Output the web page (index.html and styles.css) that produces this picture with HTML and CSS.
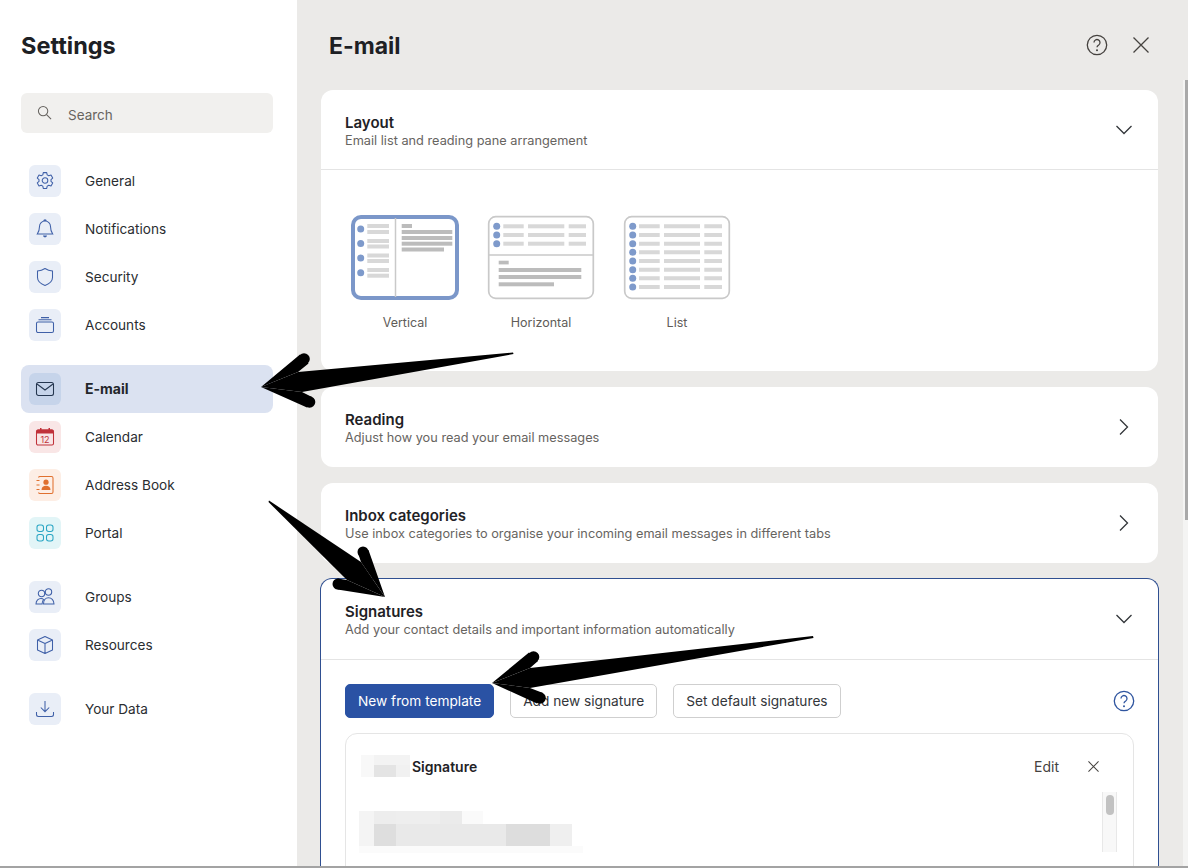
FILE: index.html
```html
<!DOCTYPE html>
<html lang="en">
<head>
<meta charset="utf-8">
<title>Settings</title>
<link rel="stylesheet" href="styles.css">
</head>
<body>
<div class="app">
  <aside class="sidebar">
    <h1 class="page-title">Settings</h1>
    <div class="search">
      <svg class="search-icon" viewBox="0 0 16 16"><circle cx="6.5" cy="6.5" r="5"/><path d="M10.2 10.2 15 15"/></svg>
      <span class="label-low">Search</span>
    </div>
    <nav class="nav">
      <div class="nav-group">
        <div class="nav-item"><span class="tile tile-blue"><svg viewBox="0 0 20 20"><path d="M8.3 1.6h3.4l.5 2.3 1.6.9 2.2-.7 1.7 3-1.7 1.5v1.8l1.7 1.5-1.7 3-2.2-.7-1.6.9-.5 2.3H8.3l-.5-2.3-1.6-.9-2.2.7-1.7-3 1.7-1.5V8.600l-1.700-1.500 1.700-3 2.200.7 1.600-.9z" stroke-linejoin="round"/><circle cx="10" cy="9.500" r="2.800"/></svg></span><span class="label">General</span></div>
        <div class="nav-item"><span class="tile tile-blue"><svg viewBox="0 0 20 20"><path d="M10 2a5.500 5.500 0 0 0-5.500 5.500c0 4-1.200 6-2.200 7.500h15.400c-1-1.500-2.200-3.500-2.200-7.500A5.500 5.500 0 0 0 10 2zM8.800 1.800a1.200 1 0 0 1 2.400 0"/><path class="solid" d="M8 16.600h4a2 1.800 0 0 1-4 0z"/></svg></span><span class="label">Notifications</span></div>
        <div class="nav-item"><span class="tile tile-blue"><svg viewBox="0 0 20 20"><path d="M10 1.500c2.500 1.600 5 2.300 7.500 2.500v6.500c0 3.600-3.300 6.400-7.500 8-4.200-1.600-7.500-4.400-7.500-8V4c2.500-.2 5-.9 7.500-2.500z"/></svg></span><span class="label">Security</span></div>
        <div class="nav-item"><span class="tile tile-blue"><svg viewBox="0 0 20 20"><rect x="1.500" y="7" width="17" height="10.500" rx="1.500"/><path d="M3.500 4.800h13M6 2.600h8"/></svg></span><span class="label">Accounts</span></div>
      </div>
      <div class="nav-group">
        <div class="nav-item active"><span class="tile tile-active"><svg viewBox="0 0 20 20"><rect x="1.500" y="3.500" width="17" height="13" rx="2"/><path d="m2 5 8 6 8-6"/></svg></span><span class="label">E-mail</span></div>
        <div class="nav-item"><span class="tile tile-red"><svg viewBox="0 0 20 20"><path class="solid" d="M3 2.500h14a1.500 1.500 0 0 1 1.500 1.500v2.500h-17V4A1.500 1.500 0 0 1 3 2.500zM5 1h1.500v2H5zM13.500 1H15v2h-1.500z"/><rect x="1.500" y="3" width="17" height="15" rx="1.500"/><text x="10" y="15.500" class="cal-num">12</text></svg></span><span class="label">Calendar</span></div>
        <div class="nav-item"><span class="tile tile-orange"><svg viewBox="0 0 20 20"><path d="M3.500 2.500a1.500 1.500 0 0 1 1.500-1h11.500a1.500 1.500 0 0 1 1.500 1.500v14a1.500 1.500 0 0 1-1.500 1.500H5a1.500 1.500 0 0 1-1.500-1M1.500 5.500h3M1.500 10h3M1.500 14.500h3"/><circle class="solid" cx="11" cy="7.200" r="2.600"/><path class="solid" d="M6.500 15c0-3 2-4.300 4.500-4.300s4.500 1.300 4.500 4.300z"/></svg></span><span class="label">Address Book</span></div>
        <div class="nav-item"><span class="tile tile-teal"><svg viewBox="0 0 20 20"><rect x="2" y="2" width="6.500" height="6.500" rx="2.200"/><rect x="11.500" y="2" width="6.500" height="6.500" rx="2.200"/><rect x="2" y="11.500" width="6.500" height="6.500" rx="2.200"/><rect x="11.500" y="11.500" width="6.500" height="6.500" rx="2.200"/></svg></span><span class="label">Portal</span></div>
      </div>
      <div class="nav-group">
        <div class="nav-item"><span class="tile tile-blue"><svg viewBox="0 0 20 20"><circle cx="6.500" cy="6.500" r="3.200"/><circle cx="13.500" cy="5" r="3.200"/><path d="M1 17c0-3.500 2.500-5.500 5-5.500 1 0 2 .3 2.600 1-1 1-1.500 2.600-1.500 4.500zM8.500 17c0-4 2.200-6.300 5-6.300s5.500 2.300 5.500 6.300z"/></svg></span><span class="label">Groups</span></div>
        <div class="nav-item"><span class="tile tile-blue"><svg viewBox="0 0 20 20"><path d="m10 1.500 7.500 3.500v10L10 18.500 2.500 15V5zM2.500 5 10 8.500 17.500 5M10 8.500v10" stroke-linejoin="round"/></svg></span><span class="label">Resources</span></div>
      </div>
      <div class="nav-group">
        <div class="nav-item"><span class="tile tile-blue"><svg viewBox="0 0 20 20"><path d="M10 2v10.500M5.800 8.500l4.200 4.200 4.200-4.200M1.500 13v2.500a2 2 0 0 0 2 2h13a2 2 0 0 0 2-2V13"/></svg></span><span class="label">Your Data</span></div>
      </div>
    </nav>
  </aside>

  <main class="main">
    <header class="main-header">
      <h2 class="page-title">E-mail</h2>
      <div class="header-actions">
        <svg class="help-icon" viewBox="0 0 22 22"><circle cx="11" cy="11" r="9.700"/><path d="M8 8.500a3 3 0 1 1 4.700 2.500c-1.100.7-1.700 1.200-1.700 2.300"/><circle class="dot" cx="11" cy="16.200" r="1"/></svg>
        <svg class="close-icon" viewBox="0 0 16 16"><path d="m.5.500 15 15M15.500.500l-15 15"/></svg>
      </div>
    </header>

    <section class="card">
      <div class="card-head card-head-line">
        <div><h3>Layout</h3><p>Email list and reading pane arrangement</p></div>
        <svg class="chev" viewBox="0 0 16 10"><path d="m.5 1 7.500 7.500L15.500 1"/></svg>
      </div>
      <div class="layouts">
        <div class="layout-opt">
          <svg class="thumb" viewBox="0 0 108 85">
            <rect class="frame-on" x="2" y="2" width="104" height="81" rx="8"/>
            <path class="rule" d="M44.500 3v79"/>
            <g class="dots"><circle cx="9.700" cy="14" r="3.500"/><circle cx="9.700" cy="28.500" r="3.500"/><circle cx="9.700" cy="43" r="3.500"/><circle cx="9.700" cy="57.700" r="3.500"/></g>
            <g class="light"><rect x="16.300" y="9" width="21.700" height="4"/><rect x="16.300" y="15" width="21.700" height="4"/><rect x="16.300" y="24" width="21.700" height="4"/><rect x="16.300" y="29.500" width="21.700" height="4"/><rect x="16.300" y="38.500" width="21.700" height="4"/><rect x="16.300" y="44" width="21.700" height="4"/><rect x="16.300" y="53" width="21.700" height="4"/><rect x="16.300" y="58.700" width="21.700" height="4"/></g>
            <g class="dark"><rect x="50.700" y="9" width="10.300" height="4"/><rect x="50.700" y="15" width="50.600" height="4"/><rect x="50.700" y="21" width="50.600" height="4"/><rect x="50.700" y="26.700" width="50.600" height="4"/><rect x="50.700" y="32.500" width="42.300" height="4"/></g>
          </svg>
          <span>Vertical</span>
        </div>
        <div class="layout-opt">
          <svg class="thumb" viewBox="0 0 108 85">
            <rect class="frame-off" x="1.700" y="1.700" width="104.600" height="81.600" rx="7"/>
            <path class="rule" d="M2 40h104"/>
            <g class="dots"><circle cx="9.700" cy="11.300" r="3.500"/><circle cx="9.700" cy="20" r="3.500"/><circle cx="9.700" cy="28.700" r="3.500"/></g>
            <g class="light"><rect x="16.300" y="9.300" width="20.400" height="4"/><rect x="41" y="9.300" width="36.300" height="4"/><rect x="81.700" y="9.300" width="17.300" height="4"/><rect x="16.300" y="18" width="20.400" height="4"/><rect x="41" y="18" width="36.300" height="4"/><rect x="81.700" y="18" width="17.300" height="4"/><rect x="16.300" y="26.700" width="20.400" height="4"/><rect x="41" y="26.700" width="36.300" height="4"/><rect x="81.700" y="26.700" width="17.300" height="4"/></g>
            <g class="dark"><rect x="11.700" y="45.700" width="10" height="3.700"/><rect x="11.700" y="53" width="82.600" height="4"/><rect x="11.700" y="60" width="82.600" height="4"/><rect x="11.700" y="67.300" width="55.300" height="4"/></g>
          </svg>
          <span>Horizontal</span>
        </div>
        <div class="layout-opt">
          <svg class="thumb" viewBox="0 0 108 85">
            <rect class="frame-off" x="1.700" y="1.700" width="104.600" height="81.600" rx="7"/>
            <g class="dots"><circle cx="9.700" cy="11.300" r="3.500"/><circle cx="9.700" cy="20" r="3.500"/><circle cx="9.700" cy="28.700" r="3.500"/><circle cx="9.700" cy="37.300" r="3.500"/><circle cx="9.700" cy="46" r="3.500"/><circle cx="9.700" cy="54.700" r="3.500"/><circle cx="9.700" cy="63.300" r="3.500"/><circle cx="9.700" cy="72" r="3.500"/></g>
            <g class="light"><path d="M16 11.300h20.700M41 11.300h36M81.300 11.300h17.700M16 20h20.700M41 20h36M81.300 20h17.700M16 28.700h20.700M41 28.700h36M81.300 28.700h17.700M16 37.300h20.700M41 37.300h36M81.300 37.300h17.700M16 46h20.700M41 46h36M81.300 46h17.700M16 54.700h20.700M41 54.700h36M81.300 54.700h17.700M16 63.300h20.700M41 63.300h36M81.300 63.300h17.700M16 72h20.700M41 72h36M81.300 72h17.700"/></g>
          </svg>
          <span>List</span>
        </div>
      </div>
    </section>

    <section class="card">
      <div class="card-head">
        <div><h3>Reading</h3><p>Adjust how you read your email messages</p></div>
        <svg class="chev chev-right" viewBox="0 0 10 16"><path d="m1 .500 7.500 7.500L1 15.500"/></svg>
      </div>
    </section>

    <section class="card">
      <div class="card-head">
        <div><h3>Inbox categories</h3><p>Use inbox categories to organise your incoming email messages in different tabs</p></div>
        <svg class="chev chev-right" viewBox="0 0 10 16"><path d="m1 .500 7.500 7.500L1 15.500"/></svg>
      </div>
    </section>

    <section class="card card-open">
      <div class="card-head card-head-line">
        <div><h3>Signatures</h3><p>Add your contact details and important information automatically</p></div>
        <svg class="chev" viewBox="0 0 16 10"><path d="m.5 1 7.500 7.500L15.500 1"/></svg>
      </div>
      <div class="sig-body">
        <div class="sig-actions">
          <button class="btn btn-primary">New from template</button>
          <button class="btn">Add new signature</button>
          <button class="btn">Set default signatures</button>
          <svg class="help-icon help-blue" viewBox="0 0 22 22"><circle cx="11" cy="11" r="9.700"/><path d="M8 8.500a3 3 0 1 1 4.700 2.500c-1.100.7-1.700 1.200-1.700 2.300"/><circle class="dot" cx="11" cy="16.200" r="1"/></svg>
        </div>
        <div class="sig-box">
          <div class="sig-head">
            <svg class="blur-name" viewBox="0 0 49 22"><rect width="49" height="22" fill="#f8f8f8"/><rect x="13" y="10" width="22" height="12" fill="#e4e4e4"/><rect x="35" y="10" width="14" height="12" fill="#f1f1f1"/><rect x="13" width="36" height="10" fill="#f3f3f3"/></svg>
            <strong>Signature</strong>
            <span class="sig-edit">Edit</span>
            <svg class="sig-x" viewBox="0 0 12 12"><path d="m.5.500 11 11M11.500.500l-11 11"/></svg>
          </div>
          <div class="sig-content">
            <svg class="blur-text" viewBox="0 0 224 42"><rect width="124" height="13" fill="#f4f4f4"/><rect x="15" width="22" height="13" fill="#ededed"/><rect x="37" width="44" height="13" fill="#eeeeee"/><rect x="81" width="22" height="13" fill="#ebebeb"/><rect x="103" width="21" height="13" fill="#fafafa"/><rect y="13" width="213" height="22" fill="#eeeeee"/><rect y="13" width="15" height="22" fill="#f4f4f4"/><rect x="15" y="13" width="22" height="22" fill="#dedede"/><rect x="37" y="13" width="110" height="22" fill="#e9e9e9"/><rect x="147" y="13" width="44" height="22" fill="#dddddd"/><rect x="191" y="13" width="22" height="22" fill="#efefef"/><rect y="35" width="224" height="7" fill="#fbfbfb"/></svg>
            <div class="scrollbar"><div class="scroll-thumb"></div></div>
          </div>
        </div>
      </div>
    </section>
  </main>
  <div class="edge"><div class="edge-track"><div class="edge-thumb"></div></div></div>
</div>
<svg class="arrows" viewBox="0 0 1188 868">
  <path d="M513 352.500 298 372 261 387 302 392 513.500 354z"/>
  <path d="M261 387 300 354.500 308.500 363.500 298 372zM261 387 307 407.500 312 397 302 392z"/>
  <circle cx="304" cy="359" r="5.800"/><circle cx="309.500" cy="402" r="5.800"/>
  <path d="M269 500.500 361 562 385 597 347 580 268.500 502z"/>
  <path d="M385 597 368.500 550 358 553 361 562zM385 597 337.500 589.500 337.500 578.500 347 580z"/>
  <circle cx="363" cy="552" r="5.500"/><circle cx="338" cy="584" r="5.500"/>
  <path d="M813 636 530 668 492 683 530 688 813.500 638z"/>
  <path d="M492 683 529 652.500 538 661 530 668zM492 683 537 703.500 543 693 530 688z"/>
  <circle cx="533.500" cy="657" r="5.800"/><circle cx="540" cy="698" r="5.800"/>
</svg>
</body>
</html>
```

FILE: styles.css
```css
* { box-sizing: border-box; }
html, body { margin: 0; height: 100%; overflow: hidden; }
body { font-family: Inter, "Liberation Sans", sans-serif; color: #1f2226; background: #fff; }

.app { display: flex; height: 868px; border-bottom: 2px solid #a3a3a3; overflow: hidden; }

.sidebar { width: 297px; flex: none; background: #fff; padding: 29px 24px 0 21px; }
.page-title { margin: 0; font-size: 23px; line-height: 34px; font-weight: 700; color: #1d2024; }
.sidebar .page-title { font-size: 23.500px; }

.search { display: flex; align-items: center; height: 40px; margin-top: 30px; padding-left: 16px; background: #f1f0ee; border-radius: 6px; font-size: 13.500px; color: #67645f; }
.search-icon { width: 15px; height: 15px; margin-right: 16px; margin-top: -2px; fill: none; stroke: #66635f; stroke-width: 1.100; }
.label-low { margin-top: 4px; }

.nav { margin-top: 24px; display: flex; flex-direction: column; gap: 16px; }
.nav-item { display: flex; align-items: center; gap: 24px; height: 48px; padding-left: 8px; border-radius: 8px; font-size: 13.600px; color: #2a2d31; }
.nav-item.active { background: #dbe2f1; font-weight: 700; font-size: 14px; color: #23262b; }
.label { margin-top: 0; }
.active .label { margin-top: -2px; }

.tile { width: 32px; height: 32px; flex: none; display: flex; align-items: center; justify-content: center; border-radius: 6px; }
.tile svg { width: 20px; height: 20px; fill: none; stroke: currentColor; stroke-width: 1.050; overflow: visible; }
.tile svg .solid { fill: currentColor; stroke: none; }
.tile-blue { background: #e9eef7; color: #3f60a8; }
.tile-active { background: #c6d4ea; color: #24364f; }
.tile-red { background: #f9e6e6; color: #c0323a; }
.tile-orange { background: #fdeee5; color: #e0702f; }
.tile-teal { background: #e2f5f7; color: #2aa6c4; }
.cal-num { font-size: 9px; fill: currentColor; stroke: none; text-anchor: middle; }

.main { flex: 1; min-width: 0; background: #ebeae8; padding: 0 25px 0 24px; display: flex; flex-direction: column; gap: 16px; }
.main-header { display: flex; align-items: center; justify-content: space-between; height: 74px; padding: 18px 0 0 8px; flex: none; }
.header-actions { display: flex; align-items: center; gap: 25px; padding-right: 9px; margin-top: -2px; }
.help-icon { width: 22px; height: 22px; fill: none; stroke: #45423f; stroke-width: 1.300; }
.help-icon .dot { fill: #45423f; stroke: none; }
.help-blue { stroke: #2f559f; margin-left: auto; margin-right: -1px; }
.help-blue .dot { fill: #2f559f; }
.close-icon { width: 16px; height: 16px; fill: none; stroke: #45423f; stroke-width: 1.300; }

.card { background: #fff; border-radius: 12px; flex: none; }
.card-head { display: flex; align-items: center; justify-content: space-between; height: 80px; padding: 4px 24px 0; }
.card-head-line { border-bottom: 1px solid #e4e4e4; }
.card-head h3 { margin: 0; font-size: 15px; line-height: 18px; font-weight: 600; color: #1f2226; }
.card-head p { margin: 0; font-size: 12.750px; line-height: 18px; color: #67645f; }
.chev { width: 16px; height: 10px; fill: none; stroke: #33363a; stroke-width: 1.300; margin: -4px 2px 0 0; }
.chev-right { width: 10px; height: 16px; margin-right: 5px; }

.layouts { display: flex; height: 201px; padding: 45px 0 0 16px; }
.layout-opt { width: 136px; display: flex; flex-direction: column; align-items: center; gap: 15px; font-size: 12.500px; line-height: 16px; color: #605c58; }
.thumb { width: 108px; height: 85px; }
.frame-on { fill: #fff; stroke: #7b97c9; stroke-width: 4; }
.frame-off { fill: #fff; stroke: #c9c9c9; stroke-width: 1.700; }
.rule { stroke: #c9c9c9; stroke-width: 1.500; }
.dots { fill: #7e9acb; }
.light { fill: #d8d8d8; stroke: #d8d8d8; stroke-width: 4; }
.light rect { stroke: none; }
.dark { fill: #bcbcbc; }

.card-open { border: 1px solid #2f4f91; margin: -1px -1px 0; height: 320px; border-radius: 12px 12px 0 0; border-bottom: 0; }
.card-open .card-head { height: 81px; }

.sig-body { padding: 24px 24px 0; }
.sig-actions { display: flex; align-items: center; gap: 16px; }
.btn { height: 34px; padding: 0 12px; background: #fff; border: 1px solid #cfcfcf; border-radius: 5px; font: 13.700px/20px Inter, "Liberation Sans", sans-serif; color: #33363a; }
.btn-primary { background: #2a52a4; border-color: #2a52a4; color: #fff; }

.sig-box { margin-top: 15px; height: 200px; border: 1px solid #e5e5e5; border-radius: 12px; padding: 21px 15px 0 15px; }
.sig-head { display: flex; align-items: center; height: 22px; font-size: 14px; }
.blur-name { width: 49px; height: 22px; margin-right: 2px; }
.sig-head strong { font-weight: 600; color: #1f2226; }
.sig-edit { margin-left: auto; color: #45423f; }
.sig-x { width: 11px; height: 11px; margin: 0 19px 0 29px; fill: none; stroke: #45423f; stroke-width: 1.100; }

.sig-content { position: relative; display: flex; justify-content: space-between; align-items: flex-start; margin-top: 15px; }
.blur-text { width: 224px; height: 42px; margin: 19px 0 0 -2px; }
.scrollbar { width: 15px; height: 60px; margin-right: 1px; padding: 3px 3px; background: #f8f8f8; border-left: 1px solid #e8e8e8; border-right: 1px solid #e8e8e8; }
.scroll-thumb { width: 8px; height: 20px; border-radius: 4px; background: #c2c2c2; }

.edge { width: 5px; flex: none; background: #ebeae8; padding-top: 80px; display: flex; }
.edge-track { flex: 1; background: #f4f4f3; padding-left: 2px; }
.edge-thumb { width: 3px; height: 440px; background: #a9a9a9; }

.arrows { position: absolute; left: 0; top: 0; width: 1188px; height: 868px; pointer-events: none; fill: #000; }
```
